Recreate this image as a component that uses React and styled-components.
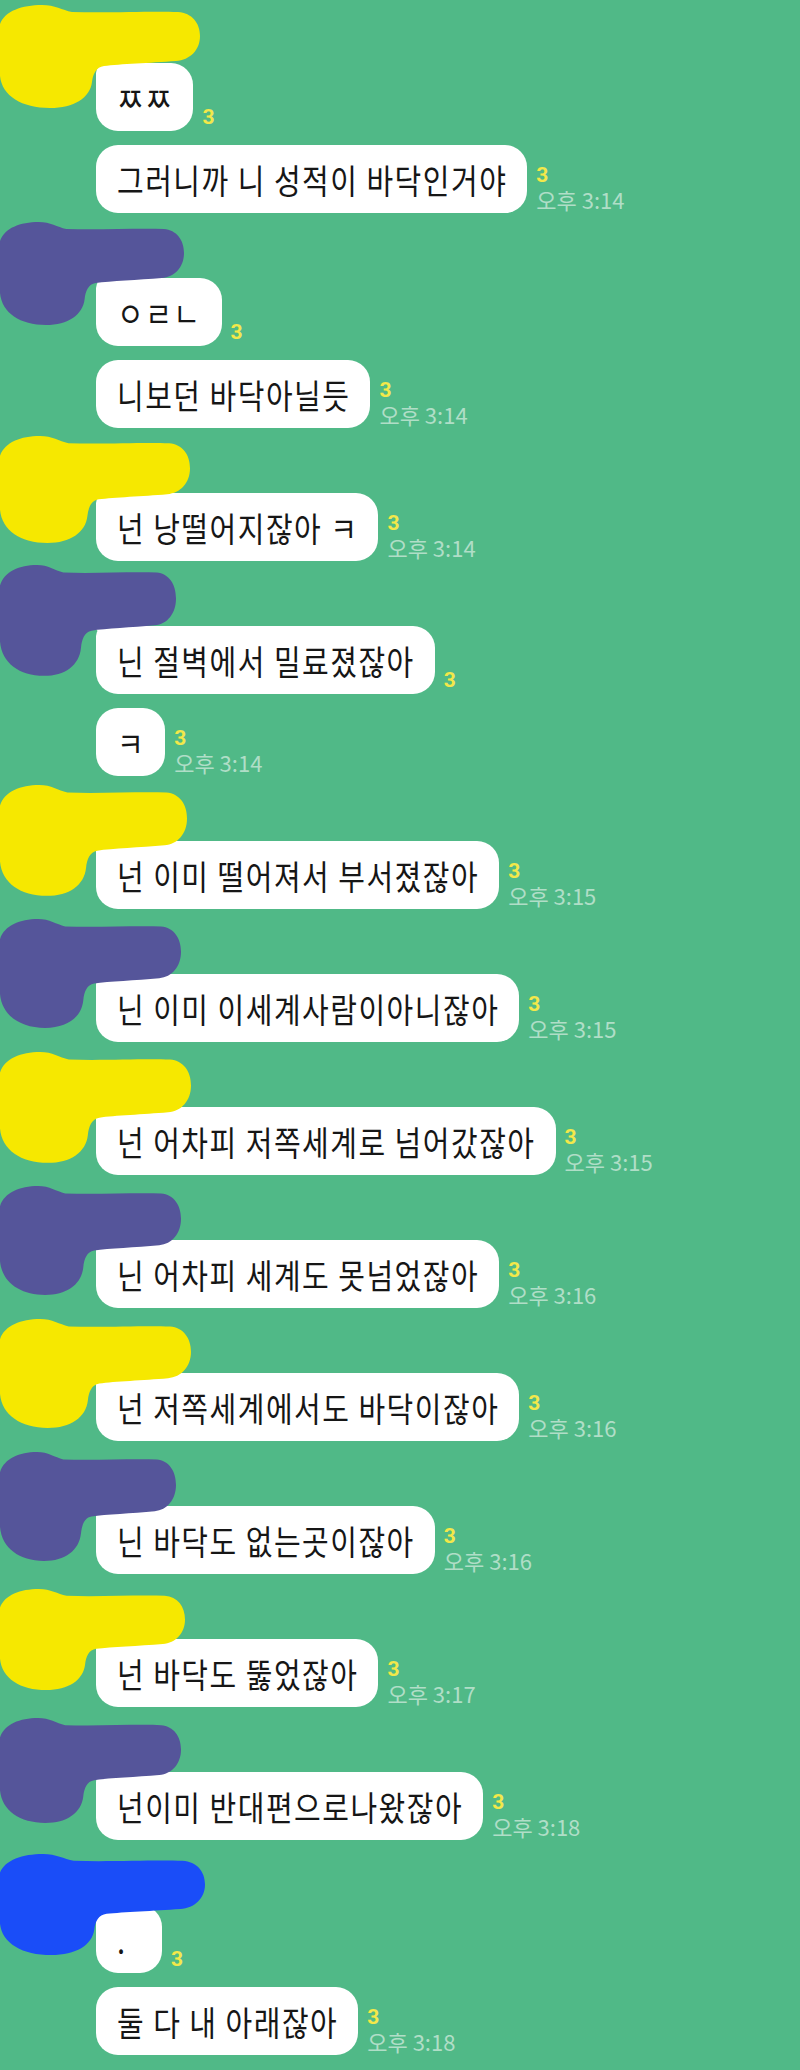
import React from 'react';
import styled, { createGlobalStyle, css } from 'styled-components';

const GlobalStyle = createGlobalStyle`
  html, body {
    margin: 0;
    padding: 0;
    background: #50b987;
  }
  body {
    font-family: "Noto Sans CJK KR", "Noto Sans", sans-serif;
  }
`;

const Chat = styled.main`
  width: 800px;
  min-height: 2070px;
  box-sizing: border-box;
  padding-top: 63px;
  background: #50b987;
  display: flex;
  flex-direction: column;
  gap: 65px;
  overflow: hidden;
`;

const Group = styled.section`
  position: relative;
  display: flex;
  flex-direction: column;
  gap: 14px;
  padding-left: 96px;
`;

const Scribble = styled.svg`
  position: absolute;
  left: 0;
  z-index: 2;
`;

const Row = styled.div`
  display: flex;
  align-items: flex-end;
  gap: 9px;
`;

const Bubble = styled.div`
  position: relative;
  box-sizing: border-box;
  min-width: 66px;
  padding: 17px 20px 17px 21px;
  border-radius: 22px;
  background: #ffffff;
  color: #161616;
  font-size: 29px;
  line-height: 34px;
  letter-spacing: 1.5px;
  white-space: nowrap;

  ${p => p.$tail && css`
    border-top-left-radius: 10px;
    &::before {
      content: '';
      position: absolute;
      left: -3px;
      top: 0;
      width: 16px;
      height: 12px;
      background: #ffffff;
      clip-path: polygon(0 0, 100% 20%, 70% 100%);
    }
  `}
`;

const Words = styled.span`
  display: inline-block;
  transform: scaleY(1.18);
`;

const Meta = styled.div`
  display: flex;
  flex-direction: column;
  align-items: flex-start;
  padding-bottom: ${p => (p.$timed ? '1px' : '3px')};
`;

const ReadCount = styled.span`
  color: #f3e84a;
  font-family: Roboto, "Liberation Sans", sans-serif;
  font-weight: 700;
  font-size: 21px;
  line-height: 21px;
`;

const Time = styled.span`
  color: #b0dec7;
  font-size: 22px;
  line-height: 26px;
  white-space: nowrap;
`;

const YELLOW = '#f6e800';
const PURPLE = '#55559a';
const BLUE = '#1a4df8';

const groups = [
  { color: YELLOW, top: -59, w: 200, h: 106, msgs: [{ t: 'ㅉㅉ' }, { t: '그러니까 니 성적이 바닥인거야', time: '오후 3:14' }] },
  { color: PURPLE, top: -57, w: 184, h: 106, msgs: [{ t: 'ㅇㄹㄴ' }, { t: '니보던 바닥아닐듯', time: '오후 3:14' }] },
  { color: YELLOW, top: -58, w: 190, h: 110, msgs: [{ t: '넌 낭떨어지잖아 ㅋ', time: '오후 3:14' }] },
  { color: PURPLE, top: -62, w: 176, h: 114, msgs: [{ t: '닌 절벽에서 밀료졌잖아' }, { t: 'ㅋ', time: '오후 3:14' }] },
  { color: YELLOW, top: -57, w: 187, h: 114, msgs: [{ t: '넌 이미 떨어져서 부서졌잖아', time: '오후 3:15' }] },
  { color: PURPLE, top: -56, w: 181, h: 112, msgs: [{ t: '닌 이미 이세계사람이아니잖아', time: '오후 3:15' }] },
  { color: YELLOW, top: -56, w: 191, h: 114, msgs: [{ t: '넌 어차피 저쪽세계로 넘어갔잖아', time: '오후 3:15' }] },
  { color: PURPLE, top: -55, w: 181, h: 112, msgs: [{ t: '닌 어차피 세계도 못넘었잖아', time: '오후 3:16' }] },
  { color: YELLOW, top: -55, w: 191, h: 112, msgs: [{ t: '넌 저쪽세계에서도 바닥이잖아', time: '오후 3:16' }] },
  { color: PURPLE, top: -55, w: 176, h: 112, msgs: [{ t: '닌 바닥도 없는곳이잖아', time: '오후 3:16' }] },
  { color: YELLOW, top: -51, w: 185, h: 104, msgs: [{ t: '넌 바닥도 뚫었잖아', time: '오후 3:17' }] },
  { color: PURPLE, top: -55, w: 181, h: 108, msgs: [{ t: '넌이미 반대편으로나왔잖아', time: '오후 3:18' }] },
  { color: BLUE, top: -52, w: 205, h: 104, msgs: [{ t: '.' }, { t: '둘 다 내 아래잖아', time: '오후 3:18' }] },
];

// marker scribble hiding profile photo + name
function Blot({ color, top, w, h }) {
  return (
    <Scribble style={{ top }} width={w} height={h} viewBox="0 0 200 106" preserveAspectRatio="none">
      <path
        fill={color}
        d="M0 20 C5 7 22 1 42 1 C55 1 62 6 72 8 C110 9 150 7 178 8 C192 9 200 19 200 32 C200 46 190 56 176 57 C150 59 120 60 104 62 C96 63 93 70 92 78 C90 94 74 104 50 104 C22 104 2 92 0 72 Z"
      />
    </Scribble>
  );
}

export default function App() {
  return (
    <>
      <GlobalStyle />
      <Chat>
        {groups.map((g, gi) => (
          <Group key={gi}>
            <Blot color={g.color} top={g.top} w={g.w} h={g.h} />
            {g.msgs.map((m, mi) => (
              <Row key={mi}>
                <Bubble $tail={mi === 0}>
                  <Words>{m.t}</Words>
                </Bubble>
                <Meta $timed={!!m.time}>
                  <ReadCount>3</ReadCount>
                  {m.time && <Time>{m.time}</Time>}
                </Meta>
              </Row>
            ))}
          </Group>
        ))}
      </Chat>
    </>
  );
}
